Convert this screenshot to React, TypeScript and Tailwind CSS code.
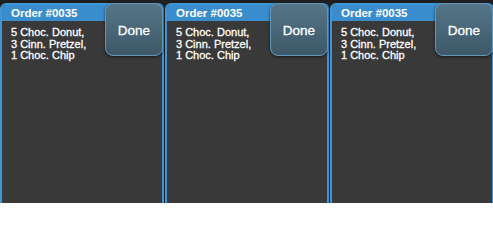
import React from "react";

const orders = [
  { id: "#0035", items: ["5 Choc. Donut,", "3 Cinn. Pretzel,", "1 Choc. Chip"] },
  { id: "#0035", items: ["5 Choc. Donut,", "3 Cinn. Pretzel,", "1 Choc. Chip"] },
  { id: "#0035", items: ["5 Choc. Donut,", "3 Cinn. Pretzel,", "1 Choc. Chip"] },
];

export default function App() {
  return (
    <div
      className="flex h-[203px] w-[493px] gap-[1px] overflow-hidden bg-[#202020] pt-[3px]"
      style={{ fontFamily: '"Liberation Sans", Arial, sans-serif' }}
    >
      {orders.map((o, i) => (
        <div
          key={i}
          className="relative flex w-[164px] shrink-0 flex-col rounded-t-[6px] border-2 border-b-0 border-[#3e96d6] bg-[#393939]"
        >
          <div className="flex h-[16px] items-center rounded-t-[4px] bg-[#3a8dcd] pl-[9px] pt-[1px]">
            <span className="text-[11.5px] font-bold leading-none text-white">Order {o.id}</span>
          </div>
          <div className="flex flex-col pl-[9px] pt-[6px] text-[11px] leading-[11.5px] text-white [-webkit-text-stroke:0.3px_white]">
            {o.items.map((t, j) => (
              <span key={j}>{t}</span>
            ))}
          </div>
          <button className="absolute right-[-1px] top-[-2px] flex h-[53px] w-[58px] justify-center rounded-[8px] border border-[#6496b8] bg-gradient-to-b from-[#557689] to-[#3d5868] pt-[20px] text-[13.5px] leading-none text-white shadow-[0_1px_3px_rgba(0,0,0,0.6)] [-webkit-text-stroke:0.3px_white]">
            Done
          </button>
        </div>
      ))}
    </div>
  );
}
